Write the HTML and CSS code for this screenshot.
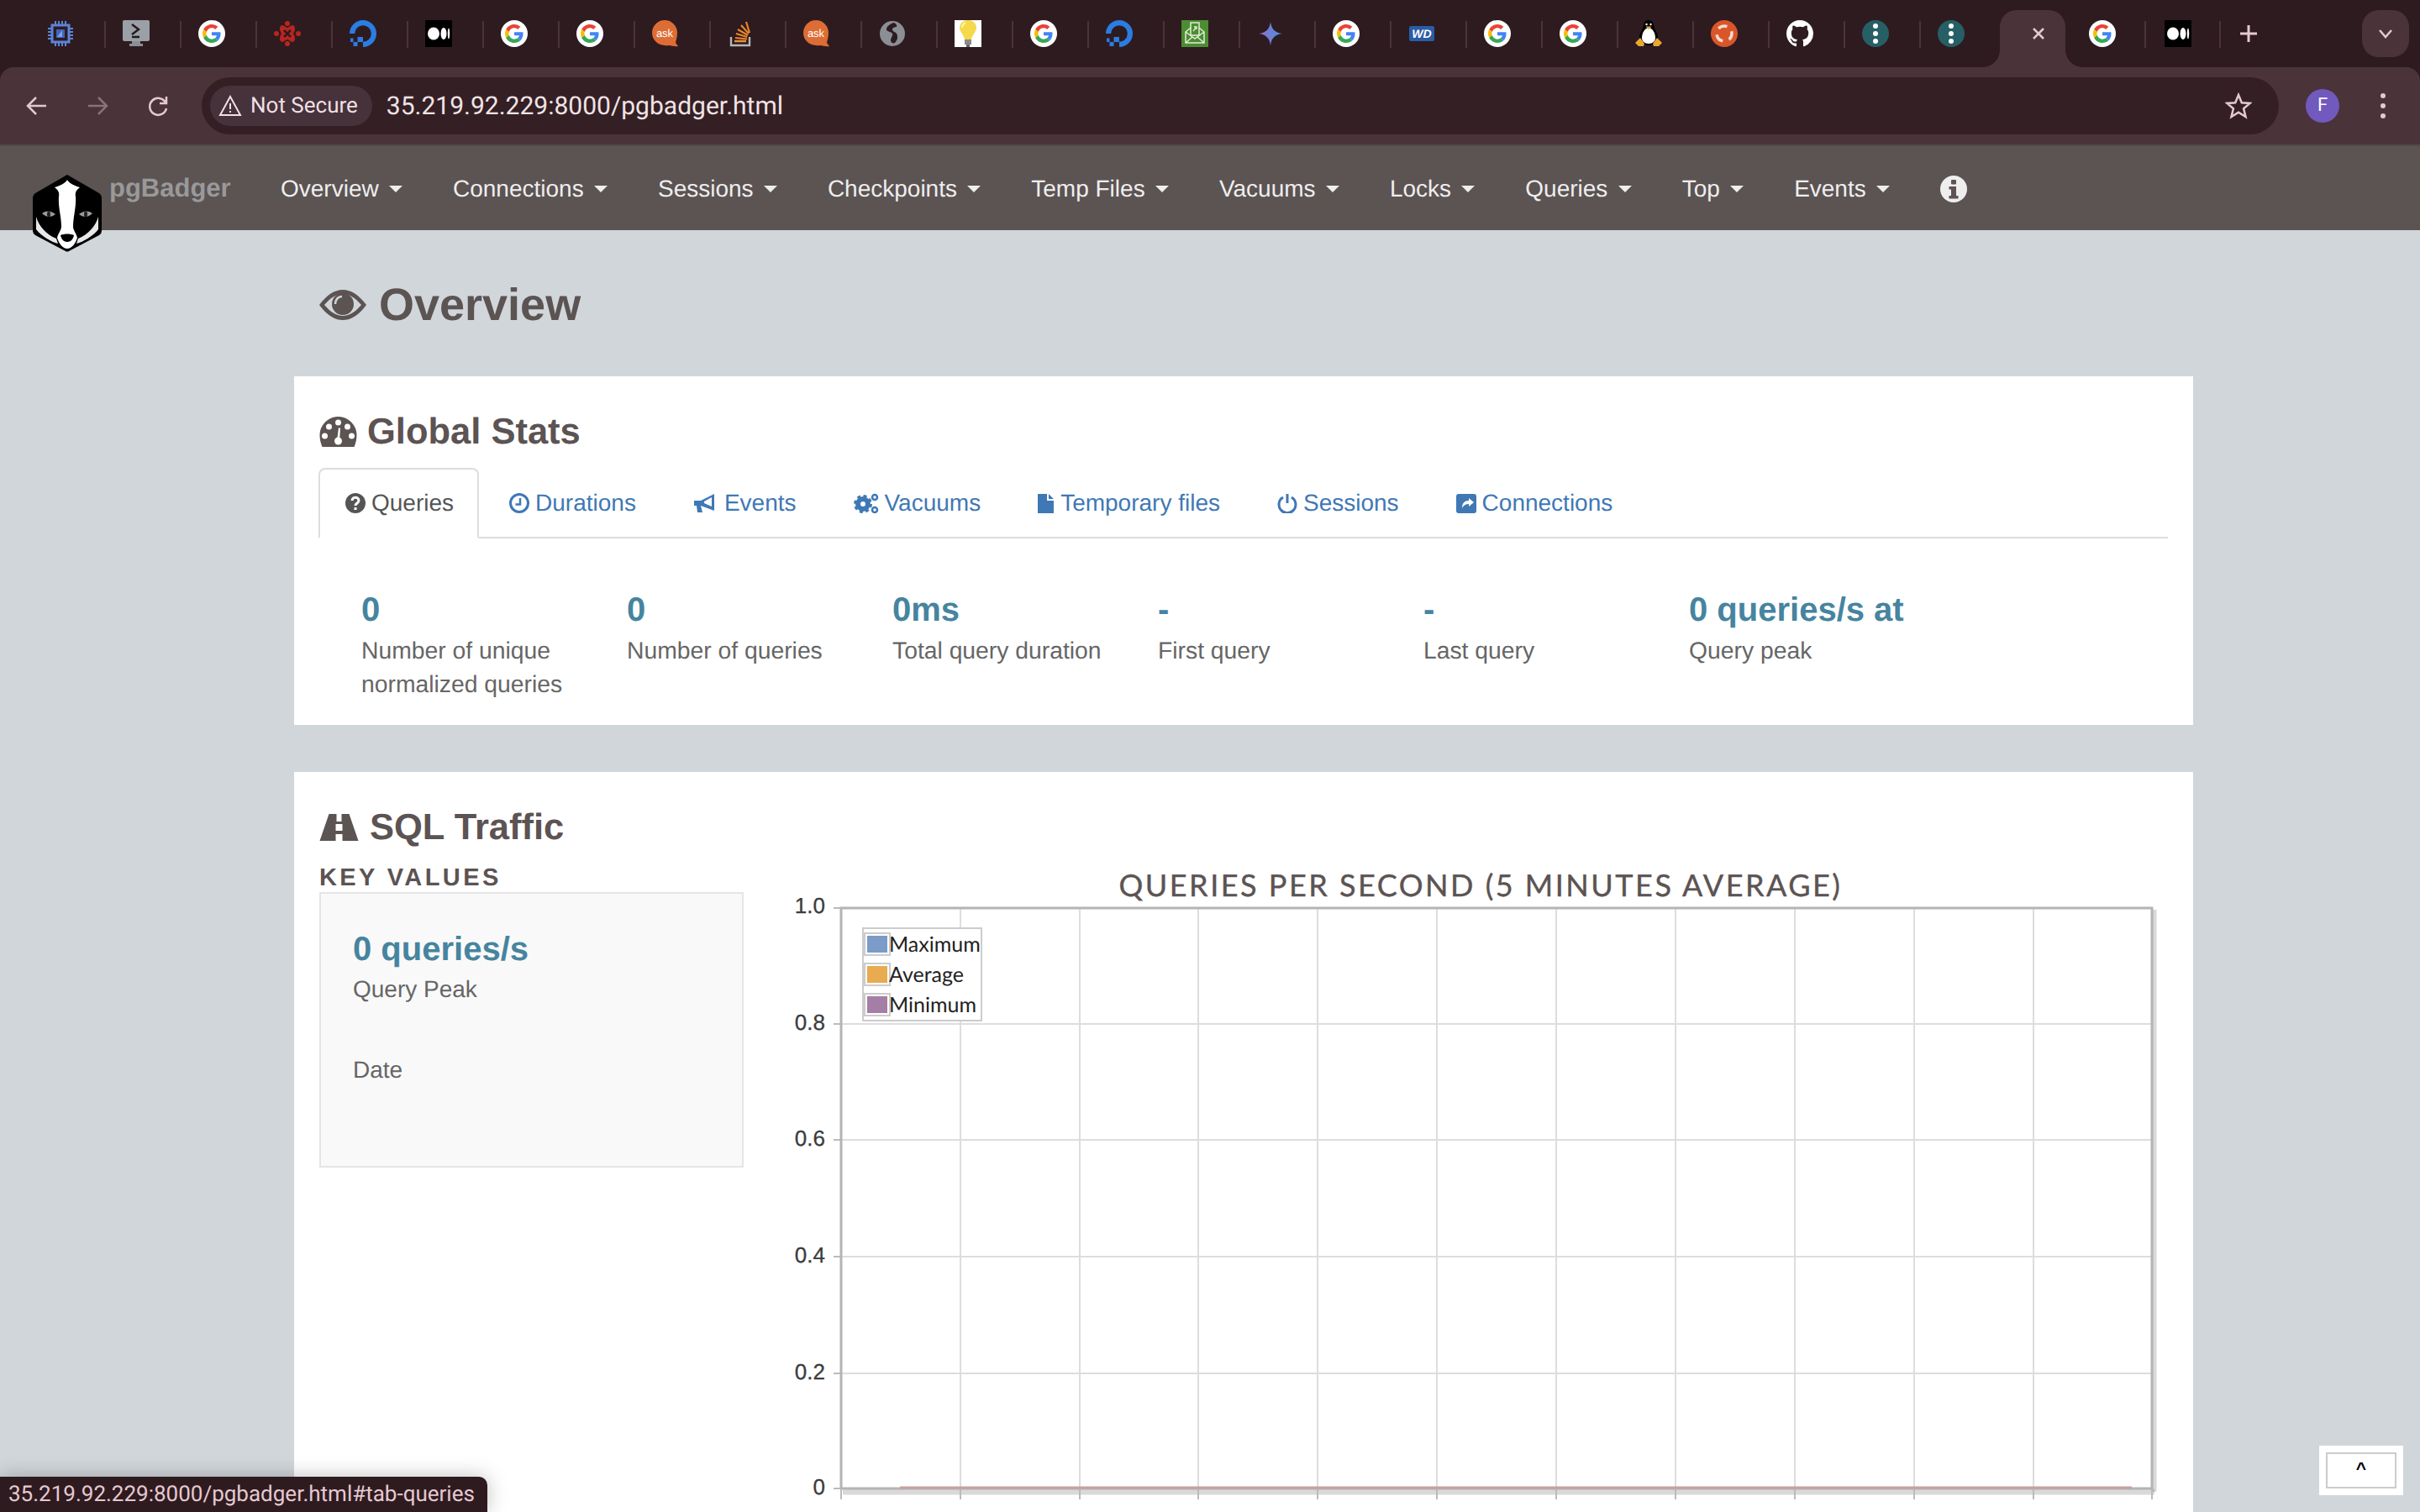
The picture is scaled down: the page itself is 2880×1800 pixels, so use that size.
FILE: index.html
```html
<!DOCTYPE html>
<html lang="en">
<head>
<meta charset="utf-8">
<title>pgBadger</title>
<link rel="stylesheet" href="styles.css">
</head>
<body>
<svg class="defs" width="0" height="0" aria-hidden="true">
  <symbol id="f-g" viewBox="0 0 32 32">
    <circle cx="16" cy="16" r="16" fill="#fff"/>
    <g transform="translate(5 5) scale(.4583)">
      <path fill="#EA4335" d="M24 9.5c3.54 0 6.71 1.22 9.21 3.6l6.85-6.85C35.9 2.38 30.47 0 24 0 14.62 0 6.51 5.38 2.56 13.22l7.98 6.19C12.43 13.72 17.74 9.5 24 9.5z"/>
      <path fill="#4285F4" d="M46.98 24.55c0-1.57-.15-3.09-.38-4.55H24v9.02h12.94c-.58 2.96-2.26 5.48-4.78 7.18l7.73 6c4.51-4.18 7.09-10.36 7.09-17.65z"/>
      <path fill="#FBBC05" d="M10.53 28.59c-.48-1.45-.76-2.99-.76-4.59s.27-3.14.76-4.59l-7.98-6.19C.92 16.46 0 20.12 0 24c0 3.88.92 7.54 2.56 10.78l7.97-6.19z"/>
      <path fill="#34A853" d="M24 48c6.48 0 11.93-2.13 15.89-5.81l-7.73-6c-2.15 1.45-4.92 2.3-8.16 2.3-6.26 0-11.57-4.22-13.47-9.91l-7.98 6.19C6.51 42.62 14.62 48 24 48z"/>
    </g>
  </symbol>
  <symbol id="f-chip" viewBox="0 0 32 32">
    <g stroke="#5b84d8" stroke-width="2" fill="none">
      <path d="M10 1v5M14 1v5M18 1v5M22 1v5M10 26v5M14 26v5M18 26v5M22 26v5M1 10h5M1 14h5M1 18h5M1 22h5M26 10h5M26 14h5M26 18h5M26 22h5"/>
      <rect x="6" y="6" width="20" height="20" stroke-width="3"/>
    </g>
    <rect x="11" y="11" width="10" height="10" fill="#3f66b8"/>
    <path d="M18 12v8h-6z" fill="#7ea0e6"/>
  </symbol>
  <symbol id="f-term" viewBox="0 0 32 32">
    <rect x="0" y="0" width="32" height="25" rx="2" fill="#9aa0a6"/>
    <rect x="11" y="25" width="10" height="3" fill="#8a8f94"/>
    <rect x="8" y="28" width="16" height="3" fill="#8a8f94"/>
    <path d="M11 5l8 6-8 6M11 20h9" stroke="#24191c" stroke-width="2.4" fill="none"/>
  </symbol>
  <symbol id="f-red" viewBox="0 0 32 32">
    <g fill="#b8261f">
      <circle cx="16" cy="4" r="3"/><circle cx="16" cy="28" r="3"/><circle cx="3" cy="16" r="3"/><circle cx="29" cy="16" r="3"/>
      <path d="M9 6c4 0 5 3 7 3s3-3 7-3c2.500 2 3 5 0 10 3 5 2.500 8 0 10-4 0-5-3-7-3s-3 3-7 3c-2.500-2-3-5 0-10-3-5-2.500-8 0-10z"/>
    </g>
    <path d="M12 12l8 8M20 12l-8 8" stroke="#2e1b20" stroke-width="2.500"/>
  </symbol>
  <symbol id="f-do" viewBox="0 0 32 32">
    <path fill="#2a7de1" d="M16 32v-6.2a9.8 9.8 0 1 0-9.8-9.8H0A16 16 0 1 1 16 32z"/>
    <rect x="9.500" y="20" width="6.500" height="6" fill="#2a7de1"/>
    <rect x="4.500" y="26" width="5" height="5" fill="#2a7de1"/>
    <rect x="1" y="21.500" width="3.500" height="4.500" fill="#2a7de1"/>
  </symbol>
  <symbol id="f-med" viewBox="0 0 32 32">
    <rect width="32" height="32" rx="1" fill="#000"/>
    <ellipse cx="10" cy="16" rx="7" ry="7.500" fill="#fff"/>
    <ellipse cx="22" cy="16" rx="3.500" ry="7" fill="#fff"/>
    <ellipse cx="28" cy="16" rx="1.200" ry="6.500" fill="#fff"/>
  </symbol>
  <symbol id="f-so" viewBox="0 0 32 32">
    <path d="M4 20v10h22V20" fill="none" stroke="#b9b6b4" stroke-width="2.400"/>
    <path d="M8 25h14" stroke="#e8963a" stroke-width="2.400"/>
    <path d="M9 21l14 1.500M10 16l13 4M12 11l12 7M16 6l9 10M22 2l4 13" stroke="#e8842a" stroke-width="2.200"/>
  </symbol>
  <symbol id="f-globe" viewBox="0 0 32 32">
    <circle cx="16" cy="16" r="15" fill="#8a8f94"/>
    <path d="M18 3c-4 1-9 4-9 8 0 3 5 2 7 5 1 2-2 5-2 8 0 3 3 4 5 3 3-3 4-7 2-11-1-2-5-2-5-5 0-2 3-3 5-3 1-2-1-4-3-5z" fill="#2e1b20"/>
  </symbol>
  <symbol id="f-bulb" viewBox="0 0 32 32">
    <rect width="32" height="32" fill="#fff"/>
    <path d="M16 0c-6 0-10 4-10 9 0 5 5 8 6 14h8c1-6 6-9 6-14 0-5-4-9-10-9z" fill="#f5d94a"/>
    <path d="M13 3c-2 1-4 3-4 6" stroke="#fff3a8" stroke-width="2" fill="none"/>
    <rect x="12" y="23" width="8" height="6" fill="#8b8b8b"/>
    <rect x="14" y="29" width="4" height="3" fill="#666"/>
  </symbol>
  <symbol id="f-mail" viewBox="0 0 32 32">
    <rect width="32" height="32" fill="#4c8c33"/>
    <path d="M5 14v13h22V14L16 5zM5 14l11 8 11-8M5 27l8-7M27 27l-8-7" fill="none" stroke="#dfeed4" stroke-width="1.500"/>
    <rect x="11" y="3" width="10" height="15" fill="#4c8c33" stroke="#dfeed4" stroke-width="1.500"/>
    <path d="M14 13l4-5M15 8h3v3" fill="none" stroke="#dfeed4" stroke-width="1.300"/>
  </symbol>
  <symbol id="f-gem" viewBox="0 0 32 32">
    <defs><linearGradient id="gem" x1="0" y1="0" x2="1" y2="0"><stop offset="0" stop-color="#8f6fc4"/><stop offset="1" stop-color="#4a90e2"/></linearGradient></defs>
    <path d="M16 2c1 8 5 13 14 14-9 1-13 6-14 14-1-8-5-13-14-14 9-1 13-6 14-14z" fill="url(#gem)"/>
  </symbol>
  <symbol id="f-tux" viewBox="0 0 32 32">
    <path d="M16 0c-4 0-6 3-6 6 0 4-5 8-5 15 0 4 3 9 11 9s11-5 11-9c0-7-5-11-5-15 0-3-2-6-6-6z" fill="#000"/>
    <path d="M16 9c-4 0-8 6-8 12 0 4 3 7 8 7s8-3 8-7c0-6-4-12-8-12z" fill="#fff"/>
    <circle cx="13.500" cy="5" r="1.200" fill="#fff"/><circle cx="18.500" cy="5" r="1.200" fill="#fff"/>
    <path d="M12.500 7.500h7L16 11z" fill="#e8a92c"/>
    <path d="M0 27l6-6 5 7-1 3-6 0zM32 27l-6-6-5 7 1 3 6 0z" fill="#e8a92c"/>
  </symbol>
  <symbol id="f-ubu" viewBox="0 0 32 32">
    <circle cx="16" cy="16" r="16" fill="#d9562a"/>
    <circle cx="16" cy="16" r="9" fill="none" stroke="#f6d9cd" stroke-width="3.500" stroke-dasharray="11 7.800" stroke-dashoffset="3"/>
  </symbol>
  <symbol id="f-gh" viewBox="0 0 16 16">
    <path fill="#fff" d="M8 0C3.58 0 0 3.58 0 8c0 3.54 2.29 6.53 5.47 7.59.4.07.55-.17.55-.38 0-.19-.01-.82-.01-1.49-2.01.37-2.53-.49-2.69-.94-.09-.23-.48-.94-.82-1.13-.28-.15-.68-.52-.01-.53.63-.01 1.08.58 1.23.82.72 1.21 1.87.87 2.33.66.07-.52.28-.87.51-1.07-1.78-.2-3.64-.89-3.64-3.95 0-.87.31-1.59.82-2.15-.08-.2-.36-1.02.08-2.12 0 0 .67-.21 2.2.82.64-.18 1.32-.27 2-.27.68 0 1.36.09 2 .27 1.53-1.04 2.2-.82 2.2-.82.44 1.1.16 1.92.08 2.12.51.56.82 1.27.82 2.15 0 3.07-1.87 3.75-3.65 3.95.29.25.54.73.54 1.48 0 1.07-.01 1.93-.01 2.2 0 .21.15.46.55.38A8.013 8.013 0 0016 8c0-4.42-3.58-8-8-8z"/>
  </symbol>
  <symbol id="f-dots" viewBox="0 0 32 32">
    <circle cx="16" cy="16" r="16" fill="#265f66"/>
    <circle cx="16" cy="7" r="3" fill="#fff"/><circle cx="16" cy="16" r="3" fill="#fff"/><circle cx="16" cy="25" r="3" fill="#fff"/>
  </symbol>
</svg>

<header class="chrome">
  <div class="tabstrip">
    <div class="tab"><svg class="fav"><use href="#f-chip"/></svg></div>
    <div class="tab"><svg class="fav"><use href="#f-term"/></svg></div>
    <div class="tab"><svg class="fav"><use href="#f-g"/></svg></div>
    <div class="tab"><svg class="fav"><use href="#f-red"/></svg></div>
    <div class="tab"><svg class="fav"><use href="#f-do"/></svg></div>
    <div class="tab"><svg class="fav"><use href="#f-med"/></svg></div>
    <div class="tab"><svg class="fav"><use href="#f-g"/></svg></div>
    <div class="tab"><svg class="fav"><use href="#f-g"/></svg></div>
    <div class="tab"><svg class="fav" viewBox="0 0 32 32"><path class="fav-ask-bg" d="M15 0a15 15 0 0 1 15 15c0 6-2 10-2 12l3 4c-4 1-8-1-11-1a15 15 0 0 1-5 0A15 15 0 0 1 15 0z"/><text x="15" y="20" class="fav-ask">ask</text></svg></div>
    <div class="tab"><svg class="fav"><use href="#f-so"/></svg></div>
    <div class="tab"><svg class="fav" viewBox="0 0 32 32"><path class="fav-ask-bg" d="M15 0a15 15 0 0 1 15 15c0 6-2 10-2 12l3 4c-4 1-8-1-11-1a15 15 0 0 1-5 0A15 15 0 0 1 15 0z"/><text x="15" y="20" class="fav-ask">ask</text></svg></div>
    <div class="tab"><svg class="fav"><use href="#f-globe"/></svg></div>
    <div class="tab"><svg class="fav"><use href="#f-bulb"/></svg></div>
    <div class="tab"><svg class="fav"><use href="#f-g"/></svg></div>
    <div class="tab"><svg class="fav"><use href="#f-do"/></svg></div>
    <div class="tab"><svg class="fav"><use href="#f-mail"/></svg></div>
    <div class="tab"><svg class="fav"><use href="#f-gem"/></svg></div>
    <div class="tab"><svg class="fav"><use href="#f-g"/></svg></div>
    <div class="tab"><svg class="fav" viewBox="0 0 32 32"><rect class="fav-wd-bg" x="1" y="7" width="30" height="18" rx="2"/><text x="16" y="21" class="fav-wd">WD</text></svg></div>
    <div class="tab"><svg class="fav"><use href="#f-g"/></svg></div>
    <div class="tab"><svg class="fav"><use href="#f-g"/></svg></div>
    <div class="tab"><svg class="fav"><use href="#f-tux"/></svg></div>
    <div class="tab"><svg class="fav"><use href="#f-ubu"/></svg></div>
    <div class="tab"><svg class="fav"><use href="#f-gh"/></svg></div>
    <div class="tab"><svg class="fav"><use href="#f-dots"/></svg></div>
    <div class="tab tab-last"><svg class="fav"><use href="#f-dots"/></svg></div>
    <div class="tab-active">
      <svg class="tab-close" viewBox="0 0 16 16"><path d="M2 2l12 12M14 2L2 14"/></svg>
    </div>
    <div class="tab tab-after"><svg class="fav"><use href="#f-g"/></svg></div>
    <div class="tab tab-end"><svg class="fav"><use href="#f-med"/></svg></div>
    <svg class="tab-new" viewBox="0 0 20 20"><path d="M10 0v20M0 10h20"/></svg>
    <div class="tab-menu"><svg viewBox="0 0 18 12"><path d="M2 2l7 8 7-8"/></svg></div>
  </div>
  <div class="toolbar">
    <div class="tbtn"><svg viewBox="0 0 26 26"><path d="M24 13H3M12 3L2 13l10 10"/></svg></div>
    <div class="tbtn tbtn-dim"><svg viewBox="0 0 26 26"><path d="M2 13h21M14 3l10 10-10 10"/></svg></div>
    <div class="tbtn"><svg viewBox="0 0 26 26"><path d="M22 9a10 10 0 1 0 1 7M23 2v8h-8"/></svg></div>
    <div class="omnibox">
      <div class="chip">
        <svg viewBox="0 0 28 26"><path d="M14 2L2 24h24zM14 10v7M14 19v2"/></svg>
        <span>Not Secure</span>
      </div>
      <span class="url">35.219.92.229:8000/pgbadger.html</span>
      <svg class="star" viewBox="0 0 32 32"><path d="M16 3l3.800 9.200 9.900.7-7.600 6.400 2.400 9.700-8.500-5.300-8.500 5.300 2.400-9.700-7.600-6.400 9.900-.7z"/></svg>
    </div>
    <div class="tbtn tbtn-profile"><span class="avatar">F</span></div>
    <div class="tbtn tbtn-more"><i></i><i></i><i></i></div>
  </div>
  <nav class="navbar">
    <span class="brand">pgBadger</span>
    <a class="nav-item">Overview<b class="caret"></b></a>
    <a class="nav-item">Connections<b class="caret"></b></a>
    <a class="nav-item">Sessions<b class="caret"></b></a>
    <a class="nav-item">Checkpoints<b class="caret"></b></a>
    <a class="nav-item">Temp Files<b class="caret"></b></a>
    <a class="nav-item">Vacuums<b class="caret"></b></a>
    <a class="nav-item">Locks<b class="caret"></b></a>
    <a class="nav-item">Queries<b class="caret"></b></a>
    <a class="nav-item">Top<b class="caret"></b></a>
    <a class="nav-item">Events<b class="caret"></b></a>
    <a class="nav-item nav-info"><svg viewBox="0 0 32 32"><circle cx="16" cy="16" r="16" fill="#eee"/><rect x="13" y="5" width="6" height="5.500" rx="1" fill="#5c5353"/><path d="M10.500 13h8.500v11h2.500v3.500h-11V24h2.500v-7.500h-2.500z" fill="#5c5353"/></svg></a>
  </nav>
</header>

<svg class="logo" viewBox="0 0 84 92">
  <path d="M42 0L80 22q3 2 3 5v40q0 3-3 5L44 91q-2 1-4 0L4 72q-3-2-3-5V27q0-3 3-5z" fill="#000"/>
  <path d="M42 6c2 4 8 7 15 9-4 3-6 6-5 11 1 12-3 24-3 36 0 4 4 8 5 13-2 7-7 13-12 13s-10-6-12-13c1-5 5-9 5-13 0-12-4-24-3-36 1-5-1-8-5-11 7-2 13-5 15-9z" fill="#fff"/>
  <path d="M5 50c3 11 12 21 24 26l2 6c-8-2-20-9-26-17zM79 50c-3 11-12 21-24 26l-2 6c8-2 20-9 26-17z" fill="#e8e8e8"/>
  <path d="M34 72c5-2 11-2 16 0-1 5-4 8-8 8s-7-3-8-8z" fill="#000"/>
  <path d="M12 46c5-4 11-3 16 1-5 4-11 4-16-1zM56 47c5-4 11-5 16-1-5 5-11 5-16 1z" fill="#9a9a9a"/>
  <ellipse cx="20" cy="47" rx="2" ry="3.500" fill="#222"/>
  <ellipse cx="64" cy="47" rx="2" ry="3.500" fill="#222"/>
</svg>

<main class="page">
  <h1 class="page-title">
    <svg class="eye" viewBox="0 0 56 36">
      <path fill-rule="evenodd" d="M0 18C9 6 18 0 28 0s19 6 28 18C47 30 38 36 28 36S9 30 0 18zM6 18c7 8 14 13 22 13s15-5 22-13C43 10 36 5 28 5S13 10 6 18z"/>
      <circle cx="28" cy="17" r="13"/>
      <path d="M19 17c0-5 3-9 8-9" fill="none" stroke="#d0d5da" stroke-width="2.500"/>
    </svg>
    Overview
  </h1>

  <section class="card card-stats">
    <h2 class="card-title">
      <svg class="ico-gauge" viewBox="0 0 44 36">
        <path d="M22 0c12 0 22 10 22 22 0 5-1 9-3 14H3C1 31 0 27 0 22 0 10 10 0 22 0z"/>
        <g fill="#fff"><circle cx="22" cy="7" r="3.500"/><circle cx="11" cy="12" r="3.500"/><circle cx="33" cy="12" r="3.500"/><circle cx="6" cy="23" r="3.500"/><circle cx="38" cy="23" r="3.500"/><circle cx="22" cy="29" r="4.500"/><path d="M20.500 29l2-16 2 1-1 15z"/></g>
      </svg>
      Global Stats
    </h2>
    <ul class="tabs">
      <li class="tabs-item tabs-active">
        <svg viewBox="0 0 24 24"><circle cx="12" cy="12" r="12" fill="currentColor"/><path d="M8 9c0-5 8-5 8 0 0 3-4 3-4 6" fill="none" stroke="#fff" stroke-width="3"/><rect x="10.500" y="17" width="3" height="3" fill="#fff"/></svg>
        Queries
      </li>
      <li class="tabs-item">
        <svg viewBox="0 0 24 24"><circle cx="12" cy="12" r="10.500" fill="none" stroke="currentColor" stroke-width="3"/><path d="M13 6v7.500H7.500" fill="none" stroke="currentColor" stroke-width="2.500"/></svg>
        Durations
      </li>
      <li class="tabs-item">
        <svg class="wide" viewBox="0 0 28 24"><path d="M0 9h8L24 1v20L8 15l2 8H4l-1-8H0z" fill="currentColor"/><path d="M12 10l9-5v11l-9-4z" fill="#fff"/></svg>
        Events
      </li>
      <li class="tabs-item">
        <svg class="wide" viewBox="0 0 30 24"><circle cx="11" cy="13" r="6" fill="none" stroke="currentColor" stroke-width="6"/><circle cx="11" cy="13" r="9.500" fill="none" stroke="currentColor" stroke-width="3" stroke-dasharray="4 3.500"/><circle cx="25" cy="5" r="3" fill="none" stroke="currentColor" stroke-width="2.500"/><circle cx="25" cy="20" r="3" fill="none" stroke="currentColor" stroke-width="2.500"/></svg>
        Vacuums
      </li>
      <li class="tabs-item">
        <svg class="narrow" viewBox="0 0 20 24"><path d="M0 1h11v8h8v15H0zM13 1l6 6h-6z" fill="currentColor"/></svg>
        Temporary files
      </li>
      <li class="tabs-item">
        <svg viewBox="0 0 24 24"><path d="M7 5a10 10 0 1 0 10 0" fill="none" stroke="currentColor" stroke-width="3"/><path d="M12 1v11" stroke="currentColor" stroke-width="3"/></svg>
        Sessions
      </li>
      <li class="tabs-item">
        <svg viewBox="0 0 24 24"><rect x="0" y="1" width="24" height="23" rx="3" fill="currentColor"/><path d="M7 18c0-6 3-9 8-9V6l6 5-6 5v-3c-3 0-6 1-8 5z" fill="#fff"/></svg>
        Connections
      </li>
    </ul>
    <div class="stats">
      <div class="stat"><div class="stat-value">0</div><div class="stat-label">Number of unique normalized queries</div></div>
      <div class="stat"><div class="stat-value">0</div><div class="stat-label">Number of queries</div></div>
      <div class="stat"><div class="stat-value">0ms</div><div class="stat-label">Total query duration</div></div>
      <div class="stat"><div class="stat-value">-</div><div class="stat-label">First query</div></div>
      <div class="stat"><div class="stat-value">-</div><div class="stat-label">Last query</div></div>
      <div class="stat"><div class="stat-value">0 queries/s at</div><div class="stat-label">Query peak</div></div>
    </div>
  </section>

  <section class="card card-traffic">
    <h2 class="card-title card-title-road">
      <svg class="ico-road" viewBox="0 0 46 32">
        <path d="M11 0h9v9h6V0h9l11 32H27v-8h-8v8H0zM19 12v8h8v-8z" fill-rule="evenodd"/>
      </svg>
      SQL Traffic
    </h2>
    <div class="traffic-row">
      <div class="key-col">
        <h3 class="key-title">KEY VALUES</h3>
        <div class="key-box">
          <div class="key-value">0 queries/s</div>
          <div class="key-label">Query Peak</div>
          <div class="key-label key-date">Date</div>
        </div>
      </div>
      <svg class="chart" viewBox="900 1025 1690 775" width="1690" height="775">
        <text class="chart-title" x="1762" y="1067">QUERIES PER SECOND (5 MINUTES AVERAGE)</text>
        <g class="grid">
          <path d="M1001 1219H2561M1001 1357H2561M1001 1496H2561M1001 1635H2561"/>
          <path d="M1143 1081V1772M1285 1081V1772M1426 1081V1772M1568 1081V1772M1710 1081V1772M1852 1081V1772M1994 1081V1772M2136 1081V1772M2278 1081V1772M2420 1081V1772"/>
        </g>
        <g class="axis-shadow">
          <path d="M2564 1083V1776" stroke-width="5"/>
          <path d="M1003 1776H2564" stroke-width="7"/>
        </g>
        <g class="ticks">
          <path d="M992 1081h9M992 1219h9M992 1357h9M992 1496h9M992 1635h9M992 1772h9"/>
          <path d="M1143 1772v13M1285 1772v13M1426 1772v13M1568 1772v13M1710 1772v13M1852 1772v13M1994 1772v13M2136 1772v13M2278 1772v13M2420 1772v13M2561 1772v13M1001 1772v13"/>
        </g>
        <path class="axis" d="M1001 1772V1081H2561V1772H1001"/>
        <path class="series" d="M1071 1771H2537"/>
        <g class="ylabels">
          <text x="982" y="1087">1.0</text>
          <text x="982" y="1226">0.8</text>
          <text x="982" y="1364">0.6</text>
          <text x="982" y="1503">0.4</text>
          <text x="982" y="1642">0.2</text>
          <text x="982" y="1779">0</text>
        </g>
        <rect class="legend-box" x="1027" y="1105" width="141" height="110"/>
        <g class="legend-swatch">
          <rect x="1029" y="1111" width="30" height="26"/>
          <rect x="1029" y="1147" width="30" height="26"/>
          <rect x="1029" y="1183" width="30" height="26"/>
        </g>
        <rect class="sw-max" x="1032" y="1114" width="24" height="20"/>
        <rect class="sw-avg" x="1032" y="1150" width="24" height="20"/>
        <rect class="sw-min" x="1032" y="1186" width="24" height="20"/>
        <g class="legend-text">
          <text x="1058" y="1133">Maximum</text>
          <text x="1058" y="1169">Average</text>
          <text x="1058" y="1205">Minimum</text>
        </g>
      </svg>
    </div>
  </section>
</main>

<div class="status">35.219.92.229:8000/pgbadger.html#tab-queries</div>
<div class="totop"><button class="totop-btn">^</button></div>
</body>
</html>
```

FILE: styles.css
```css
* { box-sizing: border-box; }
html, body { margin: 0; height: 1800px; overflow: hidden; }
body {
  position: relative;
  background: #d1d6db;
  font-family: "Liberation Sans", Arial, sans-serif;
  color: #5c5353;
  text-rendering: geometricPrecision;
}
.defs { position: absolute; }
.fav-ask-bg { fill: #dd6d34; }
.fav-ask { font: 13px "Liberation Sans", sans-serif; fill: #fff; text-anchor: middle; }
.fav-wd-bg { fill: #2a5da6; }
.fav-wd { font: italic bold 14px "Liberation Sans", sans-serif; fill: #fff; text-anchor: middle; }

/* browser chrome */
.chrome { background: #2e1b20; }
.tabstrip { display: flex; align-items: flex-start; height: 80px; padding-left: 35px; }
.tab {
  position: relative;
  flex: none;
  width: 90px;
  height: 80px;
  padding: 24px 0 0 21px;
}
.tab::after {
  content: "";
  position: absolute;
  right: -1px;
  top: 25px;
  width: 2px;
  height: 32px;
  background: #4a3339;
}
.tab-last { width: 95px; }
.tab-last::after { display: none; }
.fav { display: block; width: 32px; height: 32px; }
.tab-active {
  position: relative;
  flex: none;
  width: 78px;
  height: 68px;
  margin-top: 12px;
  background: #4a3339;
  border-radius: 20px 20px 0 0;
  padding: 20px 0 0 38px;
}
.tab-active::before, .tab-active::after {
  content: "";
  position: absolute;
  bottom: 0;
  width: 20px;
  height: 20px;
}
.tab-active::before { left: -20px; background: radial-gradient(circle at 0 0, transparent 19.500px, #4a3339 20px); }
.tab-active::after { right: -20px; background: radial-gradient(circle at 100% 0, transparent 19.500px, #4a3339 20px); }
.tab-close { display: block; width: 16px; height: 16px; fill: none; stroke: #e6c9d0; stroke-width: 2.500; }
.tab-after { width: 95px; padding-left: 28px; }
.tab-end { width: 89px; padding-left: 23px; }
.tab-new { flex: none; width: 20px; height: 20px; margin: 30px 0 0 24px; fill: none; stroke: #e6c9d0; stroke-width: 3; }
.tab-menu {
  flex: none;
  display: flex;
  align-items: center;
  justify-content: center;
  width: 56px;
  height: 56px;
  margin: 12px 13px 0 auto;
  background: #4a3339;
  border-radius: 20px;
}
.tab-menu svg { width: 18px; height: 12px; fill: none; stroke: #e6c9d0; stroke-width: 2.500; }

.toolbar {
  display: flex;
  align-items: center;
  height: 94px;
  padding: 0 8px;
  background: #4a3339;
  border-bottom: 2px solid #544a4c;
  border-radius: 16px 16px 0 0;
}
.tbtn { flex: none; display: flex; align-items: center; justify-content: center; width: 72px; height: 68px; }
.tbtn svg { width: 26px; height: 26px; fill: none; stroke: #e6c9d0; stroke-width: 2.500; }
.tbtn-dim svg { stroke: #8a7378; }
.omnibox {
  flex: 1;
  display: flex;
  align-items: center;
  height: 68px;
  margin: 0 16px;
  padding: 0 30px 0 10px;
  background: #341f24;
  border-radius: 34px;
}
.chip {
  display: flex;
  align-items: center;
  gap: 10px;
  height: 48px;
  padding: 0 17px 0 10px;
  background: #45323a;
  border-radius: 24px;
  color: #f0dfe3;
  font: 400 26px Roboto, sans-serif;
}
.chip svg { width: 28px; height: 26px; fill: none; stroke: #f0dfe3; stroke-width: 2; }
.url { margin-left: 17px; color: #f0e4e6; font: 30px Roboto, sans-serif; }
.star { width: 32px; height: 32px; margin-left: auto; margin-right: 2px; fill: none; stroke: #e6c9d0; stroke-width: 2.500; }
.avatar {
  width: 40px; height: 40px;
  border-radius: 50%;
  background: #7159be;
  color: #fff;
  font: 22px/40px Roboto, sans-serif;
  text-align: center;
}
.tbtn-more { flex-direction: column; gap: 6px; }
.tbtn-more i { width: 6px; height: 6px; border-radius: 50%; background: #e6c9d0; }

.navbar { display: flex; align-items: center; height: 100px; padding-left: 130px; background: #5c5353; }
.brand { width: 174px; color: #999; font-weight: 700; font-size: 31px; }
.nav-item { display: flex; align-items: center; padding: 1px 30px 0; color: #eee; font-size: 28px; }
.caret {
  width: 0; height: 0;
  margin-left: 12.300px;
  border-top: 8px solid #eee;
  border-left: 8px solid transparent;
  border-right: 8px solid transparent;
}
.nav-info { padding-left: 30px; padding-top: 2px; }
.nav-info svg { display: block; width: 32px; height: 32px; }

.logo { position: absolute; left: 38px; top: 208px; width: 84px; height: 92px; }

/* page */
.page { padding: 0 270px 0 350px; }
.page-title {
  display: flex;
  align-items: center;
  gap: 15px;
  height: 174px;
  margin: 0;
  padding: 3px 0 0 30px;
  font-size: 54px;
  line-height: 60px;
  font-weight: 700;
}
.eye { width: 56px; height: 36px; fill: #5c5353; }
.card { background: #fff; padding: 36px 30px 0; }
.card-stats { height: 415px; margin-bottom: 56px; }
.card-traffic { padding-top: 36px; }
.card-title {
  display: flex;
  align-items: center;
  gap: 12px;
  margin: 0;
  font-size: 43.500px;
  line-height: 60px;
  font-weight: 700;
}
.card-title-road { gap: 13px; }
.ico-gauge { width: 45px; height: 36px; fill: #5c5353; }
.ico-road { width: 47px; height: 32px; fill: #5c5353; }
.tabs {
  display: flex;
  height: 84px;
  margin: 13px 0 0 -1px;
  padding: 0;
  list-style: none;
  border-bottom: 2px solid #ddd;
}
.tabs-item {
  display: flex;
  align-items: center;
  gap: 7px;
  height: 84px;
  margin-right: 4px;
  padding: 0 30px;
  border: 2px solid transparent;
  color: #3f78b5;
  font-size: 28px;
}
.tabs-item svg { width: 24px; height: 24px; flex: none; }
.tabs-item svg.wide { width: 30px; }
.tabs-item svg.narrow { width: 20px; }
.tabs-active {
  padding-right: 28px;
  background: #fff;
  color: #555;
  border-color: #ddd #ddd #fff;
  border-radius: 8px 8px 0 0;
}
.stats { display: flex; padding: 63px 0 0 50px; }
.stat { flex: none; width: 316px; padding-right: 60px; }
.stat:last-child { width: auto; padding-right: 0; }
.stat-value { color: #46849f; font-weight: 700; font-size: 40px; line-height: 44px; }
.stat-label { margin-top: 6px; color: #666; font-size: 28.300px; line-height: 40px; }

.traffic-row { display: flex; margin-top: 10px; height: 800px; }
.key-col { flex: none; width: 505px; }
.key-title {
  margin: 0;
  height: 37px;
  color: #5c5353;
  font: 700 29px/40px "Liberation Sans", sans-serif;
  letter-spacing: 3.400px;
}
.key-box {
  height: 328px;
  padding: 44px 38px 0;
  background: #f9f9f9;
  border: 2px solid #e5e5e5;
}
.key-value { color: #46849f; font-weight: 700; font-size: 40px; line-height: 44px; }
.key-label { margin-top: 6px; color: #666; font-size: 28px; line-height: 40px; }
.key-date { margin-top: 56px; }
.chart { flex: none; margin-left: 15px; overflow: hidden; }
.chart-title {
  font: 36px Lato, sans-serif;
  letter-spacing: 2.500px;
  fill: #5c5353;
  stroke: #5c5353;
  stroke-width: .4;
  text-anchor: middle;
}
.grid path { fill: none; stroke: #ddd; stroke-width: 2; }
.ticks path { fill: none; stroke: #bbb; stroke-width: 2; }
.axis { fill: none; stroke: #b4b4b4; stroke-width: 3; }
.axis-shadow path { fill: none; stroke: rgba(0, 0, 0, .15); }
.series { fill: none; stroke: #c9a0a0; stroke-width: 3; }
.ylabels text { font: 26px "Liberation Sans", sans-serif; fill: #3c3c3c; stroke: #3c3c3c; stroke-width: .3; text-anchor: end; }
.legend-box { fill: #fff; stroke: #ccc; stroke-width: 2; }
.legend-swatch rect { fill: #fff; stroke: #ccc; stroke-width: 2; }
.sw-max { fill: #7b9bc8; }
.sw-avg { fill: #e8ab4f; }
.sw-min { fill: #a57ea6; }
.legend-text text { font: 25px Lato, sans-serif; fill: #222; }

/* overlays */
.status {
  position: absolute;
  left: 0;
  bottom: 0;
  width: 580px;
  height: 42px;
  padding-left: 10px;
  background: #2e1b20;
  border-radius: 0 10px 0 0;
  box-shadow: 0 0 24px rgba(0, 0, 0, .25);
  color: #e6c9d0;
  font: 26px/42px Roboto, sans-serif;
  white-space: nowrap;
}
.totop {
  position: absolute;
  left: 2760px;
  top: 1721px;
  width: 100px;
  height: 59px;
  padding: 8px;
  background: #fff;
}
.totop-btn {
  display: block;
  width: 84px;
  height: 43px;
  padding: 0 0 6px;
  background: #fff;
  border: 2px solid #ccc;
  color: #000;
  font: 700 21px "Liberation Sans", sans-serif;
}
```
